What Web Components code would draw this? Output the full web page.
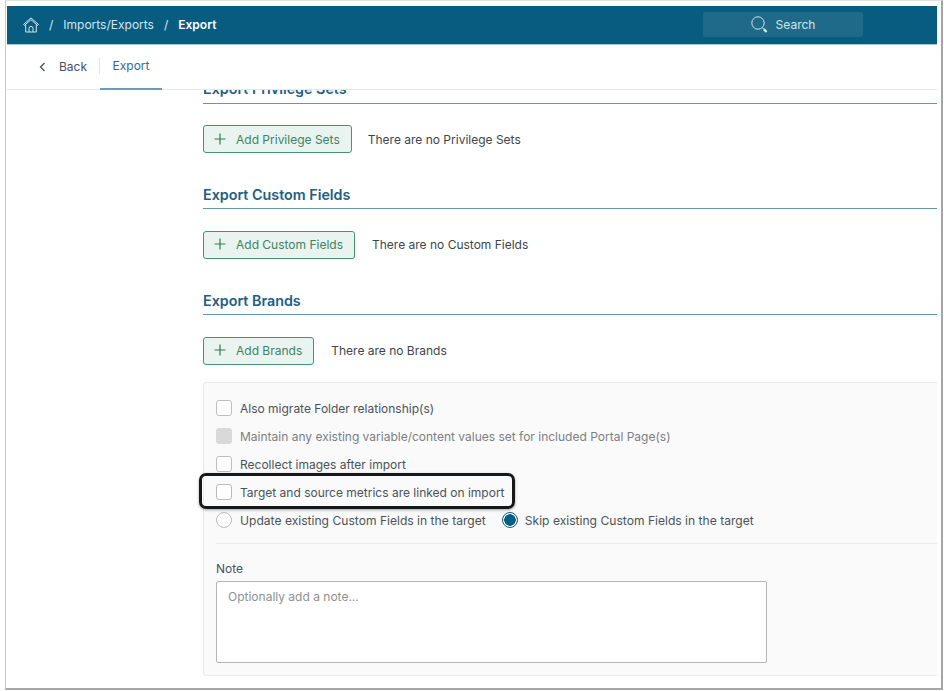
<!DOCTYPE html>
<html><head><meta charset="utf-8">
<style>
html,body{margin:0;padding:0;background:#fff;height:691px;overflow:hidden}
body{font-family:Inter,"Liberation Sans",sans-serif;font-size:12px;color:#3f4a52}
</style></head><body>
<template id="t-btn"><style>
:host{display:inline-flex;align-items:center;height:28px;box-sizing:border-box;border:1px solid #459575;border-radius:3px;background:#e9f3ef;color:#3d8464;padding:0 11px var(--bb,0) 10px;gap:10px;font-size:12px;white-space:nowrap}
svg{width:12px;height:12px;display:block}
</style><svg viewBox="0 0 12 12"><path d="M6 .5v11M.5 6h11" stroke="#2f7d5b" stroke-width="1.2" fill="none"/></svg><slot></slot></template>
<template id="t-sec"><style>
:host{display:block}
h2{margin:0;font-size:14.3px;font-weight:600;color:#1d6083;line-height:var(--lh,15px);padding-bottom:calc(21px - var(--lh,15px));border-bottom:1px solid #5f99ae;height:var(--lh,15px)}
.row{display:flex;align-items:center;gap:var(--rg,17px);margin-top:var(--gap,22px);height:28px;font-size:12px;color:#3d454b}
::slotted(span:not([slot])){margin-bottom:var(--bb,0)}
</style><h2><slot name="title"></slot></h2><div class="row"><slot></slot></div></template>
<template id="t-check"><style>
:host{display:flex;align-items:center;gap:8px;height:28px;font-size:12px;color:#4a5258;white-space:nowrap}
i{display:block;width:16px;height:16px;box-sizing:border-box;border:1px solid #b9bcbd;border-radius:3px;background:#fff}
:host([disabled]) i{background:#d9d9d9;border-color:#d9d9d9}
:host([disabled]){color:#7a7f83}
</style><i></i><slot></slot></template>
<template id="t-radio"><style>
:host{display:inline-flex;align-items:center;gap:8px;height:28px;font-size:12.1px;color:#4a5258;white-space:nowrap}
:host([checked]){gap:7px}
i{display:block;width:16px;height:16px;box-sizing:border-box;border:1px solid #b9bcbd;border-radius:50%;background:#fff}
:host([checked]) i{border-color:#075e83;background:radial-gradient(circle,#075e83 0 5.5px,#fff 6px)}
</style><i></i><slot></slot></template>
<template id="t-top"><style>
:host{display:flex;align-items:center;height:39px;background:#075c80;color:#d5e4eb;box-sizing:border-box;padding:0 0 1px 16px;border-bottom:1px solid #a9c4d1;font-size:12px;flex:none}
svg{display:block}
.sep{margin:0 10px;color:#dce8ee}
b{font-weight:600;color:#fff}
.search{margin-left:auto;margin-right:74px;width:160px;height:25px;border-radius:2px;background:#1f6a89;display:flex;align-items:center;justify-content:center;gap:8px;color:#d5e4eb}
</style>
<svg width="16" height="16" viewBox="0 0 16 16" fill="none" stroke="#d5e4eb" stroke-width="1" stroke-linejoin="round"><path d="M.6 7.4 8 .9l7.4 6.5-.8 1L8 2.7 1.4 8.4z"/><path d="M2.7 7.6V15h10.6V7.6"/><path d="M6 15v-3.6a2 2 0 0 1 4 0V15"/></svg>
<span class="sep">/</span><span>Imports/Exports</span><span class="sep">/</span><b>Export</b>
<div class="search"><svg width="17" height="17" viewBox="0 0 17 17" fill="none" stroke="#d5e4eb"><circle cx="7" cy="7" r="6.2"/><path d="M11.3 11.6 12.6 13" stroke-width="1"/><path d="M12.8 13.2 15.6 16" stroke-width="2.4"/></svg><span>Search</span></div>
</template>
<template id="t-tabs"><style>
:host{display:flex;align-items:center;height:45px;box-sizing:border-box;border-bottom:1px solid #e6e8e9;flex:none;font-size:12px;color:#4a5258;padding-left:32px}
svg{display:block;margin-right:13px}
span{margin-bottom:2px}
.d{width:1px;height:16px;background:#e0e2e3;margin:0 0 2px 12px}
.t{height:45px;box-sizing:border-box;width:62px;text-align:center;line-height:42px;color:#2f6d8c;border-bottom:2px solid #6a9db5}
</style><svg width="7" height="10" viewBox="0 0 7 10" fill="none" stroke="#3f4a52" stroke-width="1.2"><path d="M5.5 1 1.5 5l4 4"/></svg><span>Back</span><div class="d"></div><div class="t">Export</div></template>
<template id="t-panel"><style>
:host{display:block;margin-top:17px;background:#fafafa;border:1px solid #ebebeb;border-right:0;border-radius:3px 0 0 3px;box-sizing:border-box;height:294px;padding:11px 0 0 12px}
.checks{display:flex;flex-direction:column}
.radios{display:flex;gap:16px}
hr{border:0;border-top:1px solid #ebebeb;margin:9px 0 17px}
label{display:block;font-size:12px;color:#4a5258;line-height:16px;margin-bottom:4px}
.note{width:551px;height:82px;box-sizing:border-box;border:1px solid #b5b5b5;border-radius:2px;background:#fff;padding:7px 11px;color:#8d9194;font-size:12px;line-height:16px}
</style><div class="checks"><slot name="checks"></slot></div><div class="radios"><slot name="radios"></slot></div><hr><label>Note</label><div class="note">Optionally add a note...</div></template>
<template id="t-app"><style>
:host{display:flex;flex-direction:column;position:absolute;left:5px;top:0;width:938px;height:690px;box-sizing:border-box;padding:5px 4px 0 1px;border-left:1px solid #c9c9c9;border-top:1px solid #e2e2e2;border-right:2px solid #a5a5a5;border-bottom:2px solid #a5a5a5;overflow:hidden;background:#fff}
.scroll{flex:1;overflow:hidden;padding-left:196px}
.inner{margin-top:-8px}
</style><top-bar></top-bar><tab-bar></tab-bar><div class="scroll"><div class="inner"><slot></slot></div></div></template>
<template id="t-mark"><style>
:host{position:absolute;left:199px;top:473px;width:316px;height:36px;box-sizing:border-box;border:3px solid #16181a;border-radius:7px;box-shadow:0 1px 3px rgba(0,0,0,.35)}
</style></template>
<x-app>
<x-sec style="--gap:21px;--lh:13px;--rg:16px"><span slot="title">Export Privilege Sets</span><x-btn>Add Privilege Sets</x-btn><span>There are no Privilege Sets</span></x-sec>
<x-sec style="margin-top:34px;--bb:2px"><span slot="title">Export Custom Fields</span><x-btn>Add Custom Fields</x-btn><span>There are no Custom Fields</span></x-sec>
<x-sec style="margin-top:34px;--bb:2px"><span slot="title">Export Brands</span><x-btn>Add Brands</x-btn><span>There are no Brands</span></x-sec>
<x-panel>
<x-check slot="checks">Also migrate Folder relationship(s)</x-check>
<x-check slot="checks" disabled>Maintain any existing variable/content values set for included Portal Page(s)</x-check>
<x-check slot="checks">Recollect images after import</x-check>
<x-check slot="checks">Target and source metrics are linked on import</x-check>
<x-radio slot="radios">Update existing Custom Fields in the target</x-radio>
<x-radio slot="radios" checked>Skip existing Custom Fields in the target</x-radio>
</x-panel>
</x-app>
<x-mark></x-mark>
<script>
function def(name,id){customElements.define(name,class extends HTMLElement{constructor(){super();this.attachShadow({mode:'open'}).appendChild(document.getElementById(id).content.cloneNode(true));}});}
[['top-bar','t-top'],['tab-bar','t-tabs'],['x-btn','t-btn'],['x-sec','t-sec'],['x-check','t-check'],['x-radio','t-radio'],['x-panel','t-panel'],['x-app','t-app'],['x-mark','t-mark']].forEach(a=>def(a[0],a[1]));
</script>
</body></html>
